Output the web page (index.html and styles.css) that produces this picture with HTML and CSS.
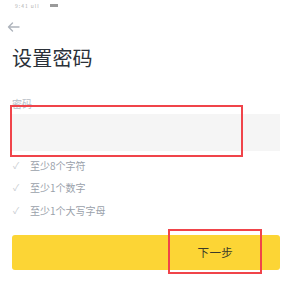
FILE: index.html
```html
<!DOCTYPE html>
<html lang="zh">
<head>
<meta charset="utf-8">
<link rel="stylesheet" href="styles.css">
</head>
<body>
<div class="page">
  <div class="status">
    <span class="status-text">9:41 ull</span>
    <span class="status-bar"></span>
  </div>
  <div class="back">
    <svg width="13" height="10" viewBox="0 0 13 10"><path d="M12 5H1.5M5.5 1L1.5 5l4 4" fill="none" stroke="#aeb4bc" stroke-width="1.4" stroke-linecap="round" stroke-linejoin="round"/></svg>
  </div>
  <h1 class="title">设置密码</h1>
  <div class="label">密码</div>
  <div class="input"></div>
  <ul class="rules">
    <li><span class="check">✓</span>至少8个字符</li>
    <li><span class="check">✓</span>至少1个数字</li>
    <li><span class="check">✓</span>至少1个大写字母</li>
  </ul>
  <div class="btn">下一步</div>
  <div class="mark mark-input"></div>
  <div class="mark mark-btn"></div>
</div>
</body>
</html>
```
FILE: styles.css
```css
* { box-sizing: border-box; }
html, body { margin: 0; padding: 0; background: #fff; }
body { font-family: "Noto Sans CJK SC", "Noto Sans", sans-serif; }
.page { position: relative; width: 290px; height: 289px; padding: 0 10px 0 12px; overflow: hidden; }
.status { height: 10px; display: flex; align-items: center; gap: 8px; margin-left: -9px; padding-top: 1px; }
.status-text { font-size: 5px; color: #b0b0b0; line-height: 6px; letter-spacing: 1px; padding-left: 12px; }
.status-bar { width: 8px; height: 3px; background: #9a9a9a; margin-left: 2px; }
.back { height: 14px; margin-top: 10px; margin-left: -5px; display: flex; align-items: center; }
.title { margin: 10px 0 0; font-size: 20px; font-weight: 400; line-height: 28px; color: #2b3139; letter-spacing: 0.2px; }
.label { margin-top: 25px; font-size: 10px; line-height: 14px; color: #b7bdc6; }
.input { margin-top: 3px; height: 37px; background: #f5f5f5; }
.rules { list-style: none; margin: 3px 0 0; padding: 0; }
.rules li { display: flex; align-items: center; height: 22.5px; font-size: 10px; color: #9aa1aa; }
.check { width: 18px; font-size: 9px; color: #c8ccd1; padding-left: 1px; }
.btn { margin-top: 13px; height: 35px; background: #fcd535; border-radius: 3px; display: flex; align-items: center; justify-content: flex-end; padding-right: 47px; font-size: 11.5px; color: #3a3a2a; letter-spacing: 0.3px; }
.mark { position: absolute; border: 2px solid #f0444a; }
.mark-input { left: 10px; top: 105px; width: 233px; height: 52px; }
.mark-btn { left: 168px; top: 229px; width: 94px; height: 45px; }
```
